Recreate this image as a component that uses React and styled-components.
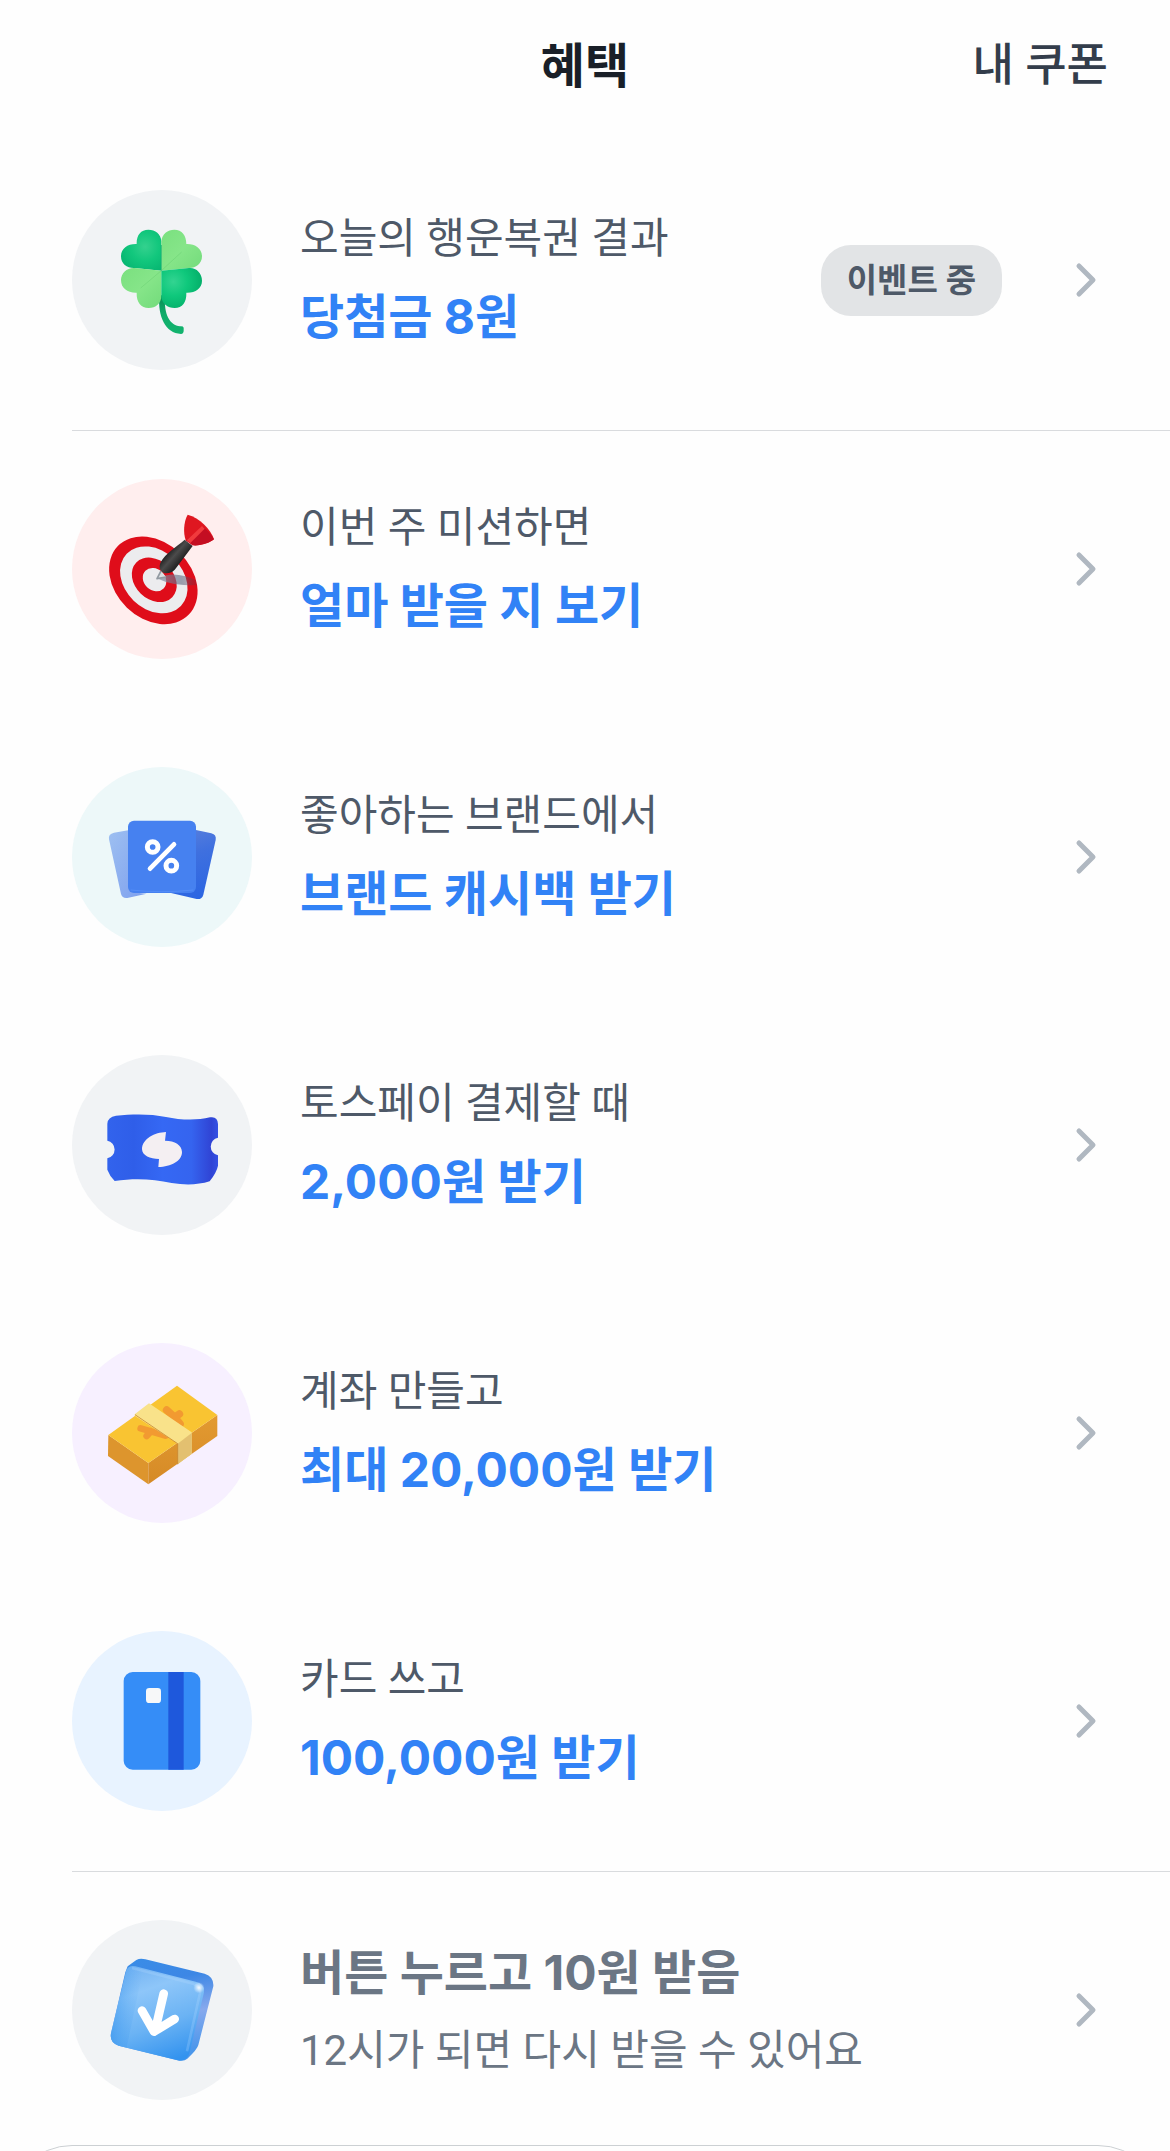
import React from 'react';
import styled, { createGlobalStyle } from 'styled-components';

const GlobalStyle = createGlobalStyle`
  * { box-sizing: border-box; }
  body {
    margin: 0;
    background: #fefefe;
    font-family: Inter, 'Noto Sans CJK KR', sans-serif;
    -webkit-font-smoothing: antialiased;
  }
`;

const Page = styled.main`
  height: 100vh;
  overflow: hidden;
`;

const Header = styled.header`
  display: grid;
  grid-template-columns: 1fr auto 1fr;
  align-items: center;
  height: 132px;
  margin-bottom: 10px;
  padding: 0 62px;
`;

const HeaderTitle = styled.h1`
  grid-column: 2;
  margin: 0;
  font-size: 48px;
  font-weight: 700;
  line-height: 60px;
  color: #191f28;
`;

const CouponButton = styled.button`
  justify-self: end;
  padding: 0;
  border: 0;
  background: none;
  font-family: Roboto, 'Noto Sans CJK KR', sans-serif;
  font-size: 45px;
  font-weight: 500;
  line-height: 60px;
  color: #333d4b;
  cursor: pointer;
`;

const Section = styled.ul`
  margin: 0;
  padding: 0;
  list-style: none;

  & + & {
    margin-left: 72px;
    border-top: 1px solid #d9dbde;
  }
  & + & > li > a {
    padding-left: 0;
  }
`;

const Row = styled.a`
  display: flex;
  align-items: center;
  gap: 48px;
  padding: 48px 72px 60px;
  color: inherit;
  text-decoration: none;
`;

const IconCircle = styled.span`
  flex: none;
  width: 180px;
  height: 180px;
  border-radius: 50%;
  background: ${(p) => p.$bg};

  svg {
    display: block;
    width: 100%;
    height: 100%;
  }
`;

const Texts = styled.span`
  flex: 1;
  min-width: 0;
  display: flex;
  flex-direction: column;
  gap: 10px;
`;

const Caption = styled.span`
  font-family: Roboto, 'Noto Sans CJK KR', sans-serif;
  font-size: 42px;
  font-weight: 400;
  line-height: 64px;
  color: ${(p) => (p.$muted ? '#6b7684' : '#4e5968')};
`;

const Title = styled.strong`
  font-size: 48px;
  font-weight: 700;
  line-height: 72px;
  color: ${(p) => (p.$muted ? '#6b7684' : '#3182f6')};
`;

const Badge = styled.span`
  flex: none;
  padding: 0 26px;
  margin-right: 24px;
  border-radius: 30px;
  background: #e2e4e6;
  font-size: 33px;
  font-weight: 700;
  line-height: 71px;
  color: #4e5968;
`;

const Chevron = styled.svg`
  flex: none;
  width: 24px;
  height: 36px;
`;

const BottomCard = styled.section`
  height: 400px;
  margin: -15px 8px 0;
  border: 1px solid #ccd0d3;
  border-radius: 64px;
`;

const CloverIcon = () => (
  <svg viewBox="36 30 540 540" aria-hidden="true">
    <defs>
      <radialGradient id="cloverDark" gradientUnits="userSpaceOnUse" cx="255" cy="200" r="85">
        <stop offset="0" stopColor="#34d18e" />
        <stop offset="0.5" stopColor="#12c77d" />
        <stop offset="1" stopColor="#06b571" />
      </radialGradient>
      <radialGradient id="cloverDark2" gradientUnits="userSpaceOnUse" cx="340" cy="305" r="85">
        <stop offset="0" stopColor="#33d491" />
        <stop offset="0.5" stopColor="#0fc87c" />
        <stop offset="1" stopColor="#04b06a" />
      </radialGradient>
      <linearGradient id="cloverLight" x1="0" y1="0" x2="1" y2="1">
        <stop offset="0" stopColor="#7ae07f" />
        <stop offset="0.5" stopColor="#86e589" />
        <stop offset="1" stopColor="#73db7b" />
      </linearGradient>
      <linearGradient id="cloverStem" x1="0" y1="0" x2="0" y2="1">
        <stop offset="0" stopColor="#078b55" />
        <stop offset="0.5" stopColor="#10ac6a" />
        <stop offset="1" stopColor="#12b36e" />
      </linearGradient>
    </defs>
    <path d="M298 346C293 410 316 460 363 462Q371 461 371 452V443Q370 438 360 439C330 436 311 405 315 346Z" fill="url(#cloverStem)" />
    <path d="M304 272V184C303 162 286 149 265 149C242 149 229 166 230 192C203 191 183 205 183 229C183 253 202 265 224 264Z" fill="url(#cloverDark)" />
    <path d="M304 272V184C306 162 323 149 343 149C366 149 379 166 379 192C405 191 426 205 426 229C426 253 405 265 387 264Z" fill="url(#cloverLight)" />
    <path d="M304 272L224 264C202 262 183 279 183 300C183 325 203 339 230 338C229 367 243 384 266 384C287 384 304 370 304 348Z" fill="url(#cloverLight)" />
    <path d="M304 272L387 264C408 262 426 279 426 302C426 325 406 339 379 338C380 367 367 384 344 384C323 384 304 370 304 348Z" fill="url(#cloverDark2)" />
    <path d="M304 272L365 216" stroke="#70d477" strokeWidth="2" />
    <path d="M304 272L242 324" stroke="#70d477" strokeWidth="2" />
    <path d="M304 195V272" stroke="#08a962" strokeWidth="2" />
  </svg>
);

const TargetIcon = () => (
  <svg viewBox="36 27 540 540" aria-hidden="true">
    <defs>
      <linearGradient id="dartBody" gradientUnits="userSpaceOnUse" x1="335" y1="240" x2="367" y2="268">
        <stop offset="0" stopColor="#292929" />
        <stop offset="0.4" stopColor="#4b4b4b" />
        <stop offset="1" stopColor="#242424" />
      </linearGradient>
      <linearGradient id="dartShade" x1="0" y1="0" x2="1" y2="0">
        <stop offset="0" stopColor="#8791a6" stopOpacity="0.7" />
        <stop offset="0.6" stopColor="#5f6880" stopOpacity="0.6" />
        <stop offset="1" stopColor="#4b2d41" stopOpacity="0.2" />
      </linearGradient>
    </defs>
    <g transform="rotate(44 280 331)">
      <ellipse cx="280" cy="331" rx="148" ry="114" fill="#df0d1a" />
      <ellipse cx="280" cy="329" rx="113" ry="87" fill="#ececee" />
      <ellipse cx="281" cy="328" rx="75" ry="58" fill="#df0d1a" />
      <ellipse cx="281" cy="327" rx="38" ry="32" fill="#ececee" />
    </g>
    <path d="M296 327C325 306 365 312 408 330L410 346C370 347 325 342 296 327Z" fill="url(#dartShade)" />
    <path d="M303 303L291 326L318 321" fill="#dbe0e3" stroke="#929aa1" strokeWidth="5" strokeLinejoin="round" />
    <path d="M374 209C350 230 315 252 303 275C293 293 302 310 321 310C333 310 343 303 350 292L398 228Z" fill="url(#dartBody)" />
    <path d="M383 134C370 158 370 189 377 211L398 226C423 228 449 219 462 208C452 177 419 144 383 134Z" fill="#df1720" />
    <path d="M377 211L429 170C445 182 457 197 462 208C443 222 417 228 398 226Z" fill="#c40e22" />
    <path d="M380 211L426 168L434 176L391 219Z" fill="#f13a3d" />
  </svg>
);

const BrandIcon = () => (
  <svg viewBox="36 21 540 540" aria-hidden="true">
    <defs>
      <linearGradient id="leftCoupon" x1="0" y1="0" x2="1" y2="1">
        <stop offset="0" stopColor="#9ec0f1" />
        <stop offset="1" stopColor="#7d9fee" />
      </linearGradient>
      <linearGradient id="rightCoupon" x1="0.2" y1="0" x2="0.4" y2="1">
        <stop offset="0" stopColor="#587fdc" />
        <stop offset="0.4" stopColor="#3f70df" />
        <stop offset="1" stopColor="#2c66e2" />
      </linearGradient>
    </defs>
    <path d="M162 218L230 206V398L260 401L202 414Q187 416 183 402L147 238Q144 222 162 218Z" fill="url(#leftCoupon)" />
    <path d="M390 206L454 220Q470 224 467 240L430 404Q426 419 410 417L333 399Z" fill="url(#rightCoupon)" />
    <rect x="204" y="182" width="204" height="217" rx="18" fill="#4681f0" />
    <path d="M212 390Q305 400 400 390" stroke="#5b92fa" strokeWidth="2" fill="none" />
    <g fill="none" stroke="#fff">
      <circle cx="278" cy="261" r="16" strokeWidth="15" />
      <circle cx="334" cy="317" r="16" strokeWidth="15" />
      <path d="M342 253L270 326" strokeWidth="14" strokeLinecap="round" />
    </g>
  </svg>
);

const TicketIcon = () => (
  <svg viewBox="36 30 540 540" aria-hidden="true">
    <defs>
      <linearGradient id="ticketBlue" x1="0" y1="0" x2="1" y2="0">
        <stop offset="0" stopColor="#3263ed" />
        <stop offset="0.24" stopColor="#2f5ee9" />
        <stop offset="0.5" stopColor="#3568f4" />
        <stop offset="0.76" stopColor="#3564ef" />
        <stop offset="0.94" stopColor="#3044d5" />
        <stop offset="1" stopColor="#3451e4" />
      </linearGradient>
    </defs>
    <path d="M142 236Q143 216 168 212C218 207 272 206 318 216C361 225 410 227 450 217Q473 213 474 237V278A27 27 0 0 0 474 331V362Q470 382 449 409Q398 425 335 414C280 402 225 399 164 408Q149 393 142 374V340A27 27 0 0 0 142 287Z" fill="url(#ticketBlue)" />
    <path d="M318 261C285 262 246 281 246 313C247 332 270 342 297 342L295 366C333 365 366 349 366 321C365 300 345 287 315 287Z" fill="#f4eff2" />
  </svg>
);

const CashIcon = () => (
  <svg viewBox="36 24 540 540" aria-hidden="true">
    <defs>
      <linearGradient id="cashSide" x1="0" y1="0" x2="0" y2="1">
        <stop offset="0" stopColor="#e39a31" />
        <stop offset="1" stopColor="#d58a26" />
      </linearGradient>
    </defs>
    <path d="M145 300L265 384V448L144 363Z" fill="#dd952d" />
    <path d="M265 384L472 240V303L265 448Z" fill="url(#cashSide)" />
    <path d="M351 152L472 240L265 384L145 300Z" fill="#f9c432" />
    <g stroke="#f29a31" strokeLinecap="round" strokeLinejoin="round" fill="none">
      <path d="M242 280L273 289L316 302M273 289L260 303" strokeWidth="20" />
      <path d="M320 225L343 246L360 267M358 237L343 248" strokeWidth="23" />
    </g>
    <path d="M224 238L267 205L395 292V356L353 388V326L224 242Z" fill="#f9e28a" />
    <path d="M353 326L395 294V356L353 388Z" fill="#e3c070" />
    <path d="M225 239L353 326V388" stroke="#bd7320" strokeWidth="2" fill="none" />
  </svg>
);

const CardIcon = () => (
  <svg viewBox="36 33 540 540" aria-hidden="true">
    <rect x="191" y="156" width="230" height="293" rx="27" fill="#358df7" />
    <path d="M325 156H371V449H325Z" fill="#1e58dc" />
    <rect x="258" y="204" width="45" height="45" rx="10" fill="#f7f8f9" />
  </svg>
);

const PressIcon = () => (
  <svg viewBox="36 30 540 540" aria-hidden="true">
    <defs>
      <linearGradient id="cubeFace" x1="0.3" y1="0" x2="0.65" y2="1">
        <stop offset="0" stopColor="#75b4f3" />
        <stop offset="0.25" stopColor="#8ec6f9" />
        <stop offset="0.62" stopColor="#6bb3f4" />
        <stop offset="1" stopColor="#3393ef" />
      </linearGradient>
      <linearGradient id="cubeEdge" x1="0" y1="0" x2="0.2" y2="1">
        <stop offset="0" stopColor="#398de7" />
        <stop offset="0.3" stopColor="#3d87e5" />
        <stop offset="0.65" stopColor="#87a9ed" />
        <stop offset="1" stopColor="#4c97eb" />
      </linearGradient>
      <linearGradient id="cubeLeft" x1="0" y1="0" x2="1" y2="0">
        <stop offset="0" stopColor="#2d8fed" stopOpacity="0.55" />
        <stop offset="1" stopColor="#58a9f3" stopOpacity="0" />
      </linearGradient>
      <radialGradient id="cubeGlow">
        <stop offset="0" stopColor="#fff" stopOpacity="0.9" />
        <stop offset="1" stopColor="#fff" stopOpacity="0" />
      </radialGradient>
    </defs>
    <path d="M203 169L229 150Q240 144 256 148L434 191Q462 200 460 229L415 405Q412 418 382 446Q374 454 358 452L176 407Q148 398 153 370L196 187Z" fill="url(#cubeEdge)" />
    <path d="M197 188Q202 164 226 169L407 215Q438 223 431 251L389 427Q382 456 354 451L176 407Q148 398 153 370Z" fill="url(#cubeFace)" />
    <path d="M197 188Q202 164 226 169L250 175L200 413L176 407Q148 398 153 370Z" fill="url(#cubeLeft)" />
    <path d="M216 174L399 221Q422 228 420 249L381 424" stroke="#b7dbff" strokeOpacity="0.25" strokeWidth="8" fill="none" />
    <circle cx="417" cy="233" r="17" fill="url(#cubeGlow)" />
    <path d="M311 251L285 363M246 302L282 365L344 327" fill="none" stroke="#fff" strokeWidth="26" strokeLinecap="round" strokeLinejoin="round" />
  </svg>
);

const sections = [
  [
    { icon: CloverIcon, bg: '#f1f3f5', caption: '오늘의 행운복권 결과', title: '당첨금 8원', badge: '이벤트 중' },
  ],
  [
    { icon: TargetIcon, bg: '#ffeeee', caption: '이번 주 미션하면', title: '얼마 받을 지 보기' },
    { icon: BrandIcon, bg: '#edf8f9', caption: '좋아하는 브랜드에서', title: '브랜드 캐시백 받기' },
    { icon: TicketIcon, bg: '#f1f3f5', caption: '토스페이 결제할 때', title: '2,000원 받기' },
    { icon: CashIcon, bg: '#f7f0ff', caption: '계좌 만들고', title: '최대 20,000원 받기' },
    { icon: CardIcon, bg: '#e8f3ff', caption: '카드 쓰고', title: '100,000원 받기' },
  ],
  [
    { icon: PressIcon, bg: '#f1f3f5', caption: '12시가 되면 다시 받을 수 있어요', title: '버튼 누르고 10원 받음', done: true },
  ],
];

function BenefitRow({ item }) {
  const Icon = item.icon;
  const title = <Title $muted={item.done}>{item.title}</Title>;
  const caption = <Caption $muted={item.done}>{item.caption}</Caption>;
  return (
    <li>
      <Row href="#">
        <IconCircle $bg={item.bg}>
          <Icon />
        </IconCircle>
        <Texts>
          {item.done ? title : caption}
          {item.done ? caption : title}
        </Texts>
        {item.badge && <Badge>{item.badge}</Badge>}
        <Chevron viewBox="0 0 24 36" aria-hidden="true">
          <path
            d="M5 4L19 18L5 32"
            fill="none"
            stroke="#b0b8c1"
            strokeWidth="5"
            strokeLinecap="round"
            strokeLinejoin="round"
          />
        </Chevron>
      </Row>
    </li>
  );
}

export default function App() {
  return (
    <>
      <GlobalStyle />
      <Page>
        <Header>
          <HeaderTitle>혜택</HeaderTitle>
          <CouponButton type="button">내 쿠폰</CouponButton>
        </Header>
        {sections.map((items, i) => (
          <Section key={i}>
            {items.map((item) => (
              <BenefitRow key={item.title} item={item} />
            ))}
          </Section>
        ))}
        <BottomCard aria-label="추가 혜택" />
      </Page>
    </>
  );
}
